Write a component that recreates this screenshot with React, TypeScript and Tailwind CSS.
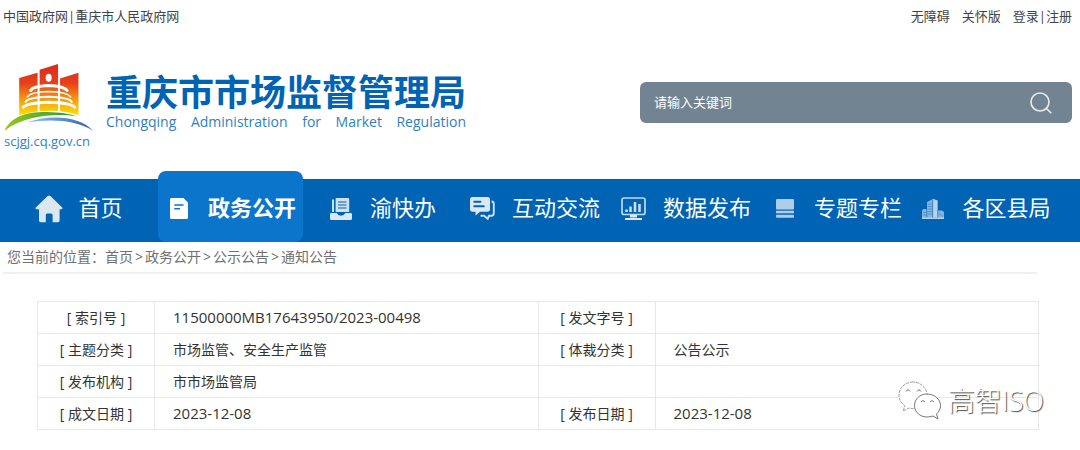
import { ReactNode } from "react";
import clsx from "clsx";

function Emblem() {
  return (
    <svg viewBox="12 190 268 206" className="h-[69px] w-[90px]" aria-hidden="true">
      <defs>
        <linearGradient id="tower" x1="0" y1="195" x2="0" y2="343" gradientUnits="userSpaceOnUse">
          <stop offset="0" stopColor="#d92b1c" />
          <stop offset="0.38" stopColor="#e6421a" />
          <stop offset="0.7" stopColor="#f59a12" />
          <stop offset="1" stopColor="#ffdc00" />
        </linearGradient>
        <linearGradient id="hill" x1="0" y1="0" x2="1" y2="0">
          <stop offset="0" stopColor="#9cc51c" />
          <stop offset="1" stopColor="#1f9a3c" />
        </linearGradient>
        <linearGradient id="river" x1="0" y1="0" x2="1" y2="0">
          <stop offset="0" stopColor="#8cc4ea" />
          <stop offset="1" stopColor="#2c62ad" />
        </linearGradient>
      </defs>
      <g fill="url(#tower)">
        <path d="M57 235L112 219V335Q84 338 57 346Z" />
        <path d="M118 210L173 193V333Q145 331 118 334Z" />
        <path d="M179 236L234 219V345Q207 337 179 334Z" />
      </g>
      <ellipse cx="145" cy="234" rx="9" ry="12" fill="#fff" />
      <g fill="none" stroke="#fff" strokeLinecap="round">
        <path d="M91 272Q98 259 145 257Q192 259 200 272" strokeWidth="9" />
        <path d="M82 291Q90 277 145 275Q200 277 210 291" strokeWidth="5" />
        <path d="M76 306Q84 293 145 291Q206 293 214 306" strokeWidth="6" />
        <path d="M69 322Q80 309 145 307Q212 309 223 322" strokeWidth="9" />
      </g>
      <path d="M13 393C30 350 80 335 140 336C180 337 205 341 230 349C170 340 70 345 13 393Z" fill="url(#hill)" />
      <path d="M80 368C140 345 235 344 278 393C230 361 150 356 80 368Z" fill="url(#river)" />
    </svg>
  );
}

const icons: Record<string, ReactNode> = {
  home: (
    <svg viewBox="0 0 28 28" className="h-7 w-7" fill="#dbe8f4" aria-hidden="true">
      <path d="M12.6 1Q14 -.2 15.4 1L27.2 12.4Q28.2 14 26.4 14.2H24.6V25.5Q24.6 27.2 23 27.2H17.6V20Q17.6 18.4 16 18.4H12.3Q10.8 18.4 10.8 20V27.2H5.6Q4 27.2 4 25.5V14.2H1.6Q-.2 14 .8 12.4Z" />
    </svg>
  ),
  doc: (
    <svg viewBox="0 0 18 21" className="h-[21px] w-[18px]" aria-hidden="true">
      <path d="M1.5 0H13.5L18 4.5V19.5Q18 21 16.5 21H1.5Q0 21 0 19.5V1.5Q0 0 1.5 0Z" fill="#fff" />
      <path d="M4.3 7H13.5M4.3 10.8H10" stroke="#0a75cb" strokeWidth="1.5" />
    </svg>
  ),
  tray: (
    <svg viewBox="0 0 22 22" className="h-[22px] w-[22px]" aria-hidden="true">
      <path d="M2 1.6H4V14H2ZM6.3 0H18Q19.2 0 19.2 1.2V14H5.6V1Q5.6 0 6.3 0Z" fill="#cfe0f0" />
      <path d="M8 4H16.5M8 7H16.5M8 10H16.5" stroke="#0063b3" strokeWidth="1.1" />
      <path d="M1.4 15H6.7Q8 17.8 11 17.8T15.3 15H20.6Q22 15 22 16.3V20.5Q22 22 20.6 22H1.4Q0 22 0 20.5V16.3Q0 15 1.4 15Z" fill="#dbe8f4" />
    </svg>
  ),
  chat: (
    <svg viewBox="0 0 25 23" className="h-[23px] w-[25px]" aria-hidden="true">
      <path d="M2.5 0H17.5Q20 0 20 2.5V12Q20 14.7 17.5 14.7H10L5.5 18.5V14.7H2.5Q0 14.7 0 12V2.5Q0 0 2.5 0Z" fill="#dbe8f4" />
      <path d="M4.2 4.8H10.5M4.2 9.3H13.8" stroke="#0063b3" strokeWidth="1.9" strokeLinecap="round" />
      <path d="M21.5 4.5Q23.8 4.5 23.8 7V16Q23.8 18.8 21.3 18.8H19L17.7 21.8L14 18.8H10.5" fill="none" stroke="#cfe0f0" strokeWidth="1.9" />
    </svg>
  ),
  monitor: (
    <svg viewBox="0 0 25 23" className="h-[23px] w-[25px]" aria-hidden="true">
      <rect x="1" y="1" width="23" height="16.5" rx="2" fill="none" stroke="#c0d8ed" strokeWidth="1.7" />
      <path d="M5.5 15V12.5M9.5 15V9.5M14 15V5M18.5 15V7" stroke="#cfe0f0" strokeWidth="2.5" />
      <path d="M9 18H16V20.5H9ZM4 21H21V23H4Z" fill="#dbe8f4" />
    </svg>
  ),
  stack: (
    <svg viewBox="0 0 18 19" className="h-[19px] w-[18px]" fill="#b0cde8" aria-hidden="true">
      <rect width="18" height="10.5" rx="1" />
      <rect y="11.7" width="18" height="2.6" />
      <rect y="15.8" width="18" height="3" rx=".8" />
    </svg>
  ),
  city: (
    <svg viewBox="0 0 22 20" className="h-5 w-[22px]" aria-hidden="true">
      <path d="M0 20V12L1 10H5V3L11 0L15.5 1.5V11.5H20L22 13V20Z" fill="#86b4dd" />
      <path d="M11 0L15.5 1.5V18H11Z" fill="#b7d2eb" />
      <path d="M0 18.5H22V20H0Z" fill="#b7d2eb" />
      <path d="M5.5 5H10M5.5 7.5H10M5.5 10H10M5.5 12.5H10M5.5 15H10M1 13.5H4M1 16H4M17 14.5L21 17.5" stroke="#3f86c5" strokeWidth=".7" />
      <path d="M4.7 10V18.5M10.7 1V18.5M15.8 11V18.5" stroke="#0063b3" strokeWidth=".6" />
    </svg>
  ),
};

const navItems = [
  { label: "首页", icon: "home" },
  { label: "政务公开", icon: "doc", active: true },
  { label: "渝快办", icon: "tray" },
  { label: "互动交流", icon: "chat" },
  { label: "数据发布", icon: "monitor" },
  { label: "专题专栏", icon: "stack" },
  { label: "各区县局", icon: "city" },
];

const crumbs = ["首页", "政务公开", "公示公告", "通知公告"];

const rows = [
  ["索引号", "11500000MB17643950/2023-00498", "发文字号", ""],
  ["主题分类", "市场监管、安全生产监管", "体裁分类", "公告公示"],
  ["发布机构", "市市场监管局", "", ""],
  ["成文日期", "2023-12-08", "发布日期", "2023-12-08"],
];

function LabelCell({ text }: { text: string }) {
  if (!text) return <td className="border border-[#e8e8e8]" />;
  return (
    <th scope="row" className="border border-[#e8e8e8] text-center font-normal">
      [ {text} ]
    </th>
  );
}

function ValueCell({ text }: { text: string }) {
  return (
    <td className={clsx("border border-[#e8e8e8] pl-[18px]", /^\d/.test(text) && "text-[15px]")}>{text}</td>
  );
}

function Watermark() {
  return (
    <div className="pointer-events-none absolute right-9 bottom-7 flex items-center gap-1.5 text-[27px] leading-[42px] font-light text-white [text-shadow:1px_1px_1px_#444]">
      <svg viewBox="0 0 44 40" className="h-10 w-11" fill="#fff" stroke="#888" strokeWidth=".8" aria-hidden="true">
        <path d="M15 1C7 1 1 7 1 14C1 19 3.5 22.5 7 25L5 30L11 27Q14 28 17 27.5C29 27 30 18 29 12C27 5 21 1 15 1Z" strokeDasharray="3 1" />
        <path d="M29 13C22 13 16.5 18 16.5 24.5S22 36 29 36Q32 36 35 35L40 38L38.5 33C41 31 42.5 28 42.5 24.5C42.5 18 36 13 29 13Z" stroke="#555" />
        <path d="M8 10.5Q10 7 12 10.5M19 10.5Q21 7 23 10.5M23 21Q25 18 27 21M32 21Q34 18 36 21" fill="none" stroke="#555" />
      </svg>
      <span>高智ISO</span>
    </div>
  );
}

export default function App() {
  return (
    <div className="bg-white font-['Open_Sans','Noto_Sans_CJK_SC',sans-serif] text-sm text-[#444]">
      <div className="flex h-8 items-center justify-between pr-2 pl-[3px] text-[13px]">
        <div className="flex">
          <a href="#">中国政府网</a>
          <span>|</span>
          <a href="#">重庆市人民政府网</a>
        </div>
        <div className="flex gap-3">
          <a href="#">无障碍</a>
          <a href="#">关怀版</a>
          <div className="flex">
            <a href="#">登录</a>
            <span>|</span>
            <a href="#">注册</a>
          </div>
        </div>
      </div>

      <header className="flex items-start justify-between pt-[31px] pr-2 pb-[29px] pl-1">
        <a href="#" className="flex gap-3 text-[#0063b3]">
          <div className="flex flex-col">
            <Emblem />
            <span className="text-[13px] leading-[18px] text-[#2f7fc1]">scjgj.cq.gov.cn</span>
          </div>
          <div className="mt-3">
            <h1 className="font-['Liberation_Sans','Noto_Sans_CJK_SC',sans-serif] text-4xl leading-[38px] font-bold">
              重庆市市场监督管理局
            </h1>
            <p className="flex justify-between text-sm leading-[18px] text-[#2f7fc1]">
              <span>Chongqing</span>
              <span>Administration</span>
              <span>for</span>
              <span>Market</span>
              <span>Regulation</span>
            </p>
          </div>
        </a>
        <form className="mt-[19px] flex h-[41px] w-1/2 max-w-[432px] items-center rounded-md bg-[#728391] pr-5 pl-3.5">
          <input
            type="text"
            aria-label="请输入关键词"
            placeholder="请输入关键词"
            className="min-w-0 flex-1 bg-transparent text-[13px] text-white outline-none placeholder:text-white"
          />
          <button type="button" aria-label="搜索">
            <svg viewBox="0 0 22 22" className="h-[22px] w-[22px]" fill="none" stroke="#e8ecef" strokeWidth="1.6" aria-hidden="true">
              <circle cx="10" cy="10" r="9" />
              <path d="M16.5 16.5L21.3 21.3" />
            </svg>
          </button>
        </form>
      </header>

      <nav className="grid h-[63px] grid-cols-[158fr_145fr_157fr_149fr_153fr_149fr_148fr_21fr] bg-[#0063b3]">
        {navItems.map((item) => (
          <a
            key={item.label}
            href="#"
            className={clsx(
              "flex items-center justify-center gap-[15px] text-[22px] leading-8 whitespace-nowrap text-white",
              item.active ? "-mt-2 rounded-lg bg-[#0a75cb] font-bold" : "pb-2"
            )}
          >
            <span className="flex w-7 justify-center pt-1">{icons[item.icon]}</span>
            {item.label}
          </a>
        ))}
      </nav>

      <div className="mr-[43px] ml-[3px] border-b-2 border-[#edf1f6] pl-1 leading-[30px] text-[#707070]">
        您当前的位置：
        {crumbs.map((c, i) => (
          <span key={c}>
            {i > 0 && <span className="px-0.5">&gt;</span>}
            <a href="#">{c}</a>
          </span>
        ))}
      </div>

      <main className="relative pt-[27px] pr-[41px] pb-5 pl-[37px]">
        <table className="w-full table-fixed border-collapse text-[#333]">
          <colgroup>
            <col className="w-[117px]" />
            <col />
            <col className="w-[117px]" />
            <col />
          </colgroup>
          <tbody>
            {rows.map((r) => (
              <tr key={r[0]} className="h-8">
                <LabelCell text={r[0]} />
                <ValueCell text={r[1]} />
                <LabelCell text={r[2]} />
                <ValueCell text={r[3]} />
              </tr>
            ))}
          </tbody>
        </table>
        <Watermark />
      </main>
    </div>
  );
}
